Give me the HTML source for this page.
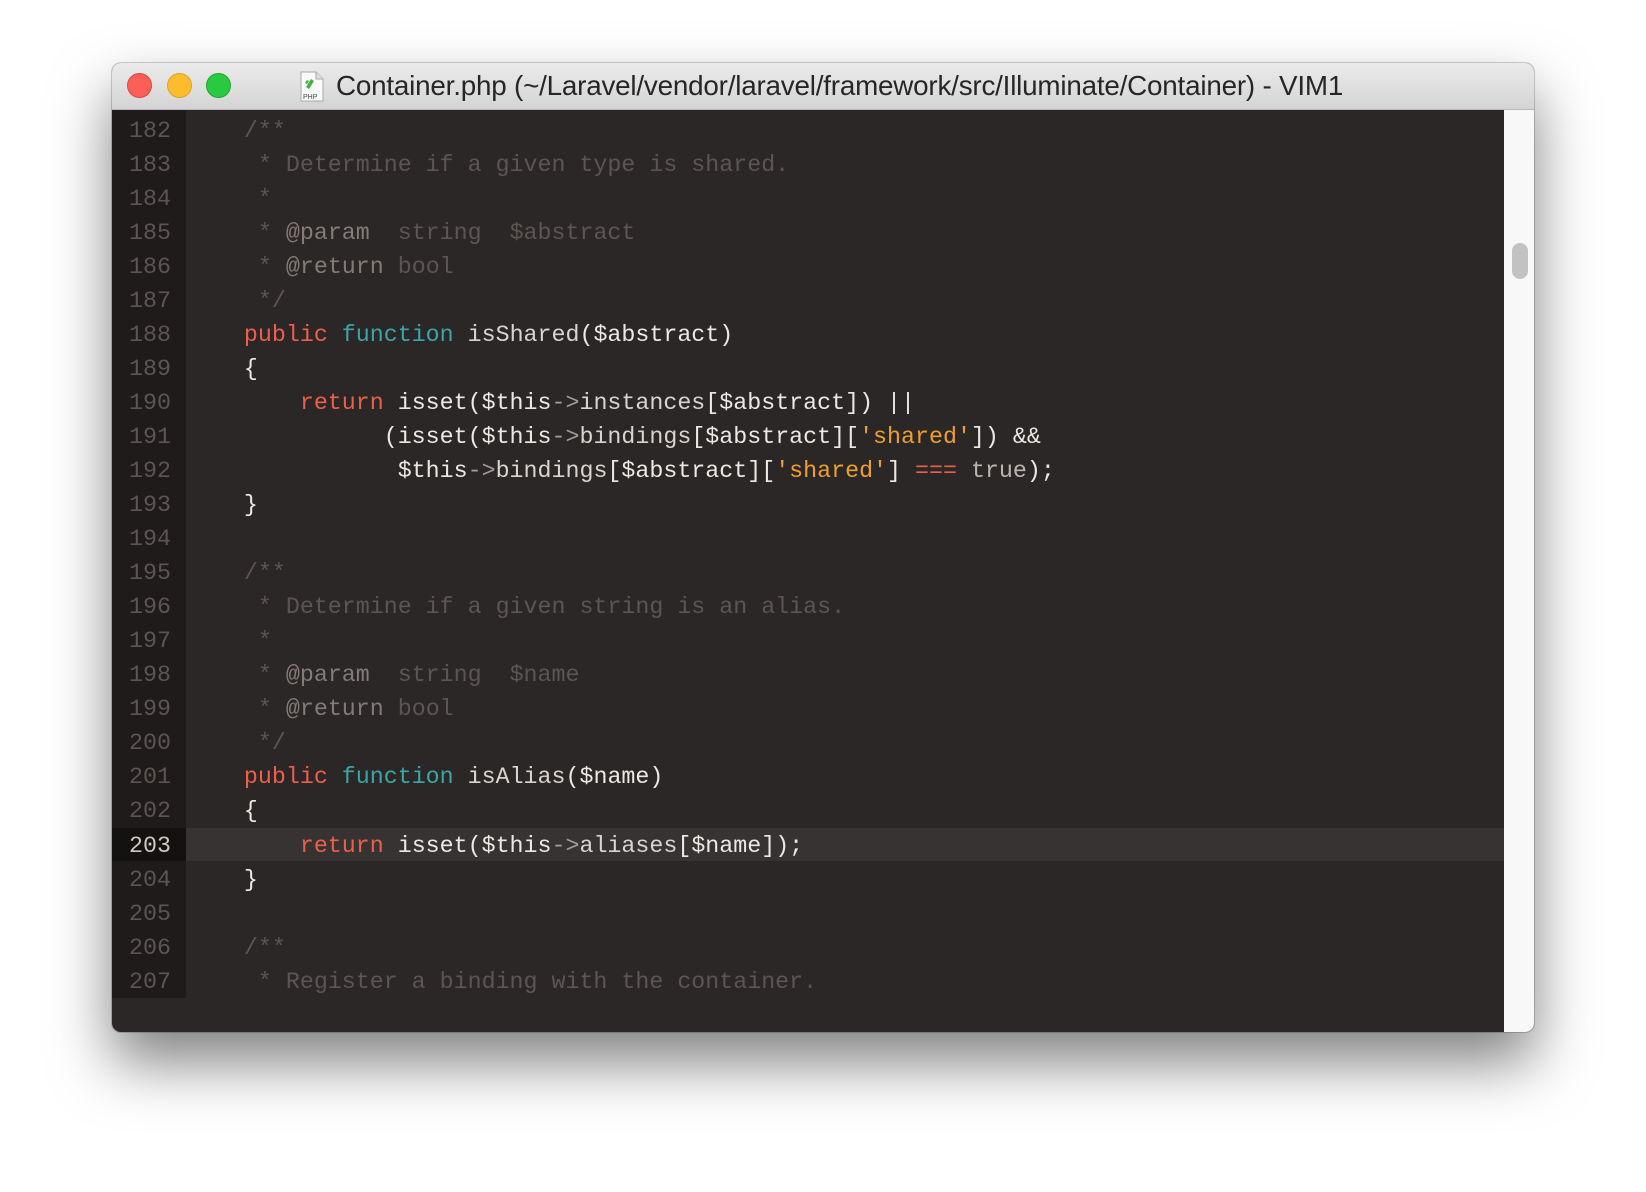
<!DOCTYPE html>
<html><head><meta charset="utf-8"><style>
html,body{margin:0;padding:0;background:#fff;width:1646px;height:1192px;overflow:hidden}
.win{position:absolute;left:112px;top:63px;width:1422px;height:969px;border-radius:9px;background:#2b2727;box-shadow:0 30px 60px rgba(0,0,0,0.5),0 0 0 1px rgba(0,0,0,0.18);overflow:hidden}
.title{position:absolute;left:0;top:0;width:1422px;height:46px;background:linear-gradient(#ebebeb,#d4d4d4);border-bottom:1px solid #b8b8b8}
.dot{position:absolute;top:10px;width:25px;height:25px;border-radius:50%}
.ttext{position:absolute;left:224px;top:7px;font:27.8px "Liberation Sans",sans-serif;color:#262626;white-space:nowrap;letter-spacing:-0.2px}
.gut{position:absolute;left:0;top:47px;width:74px;height:888px;background:#1e1b1a}
.sb{position:absolute;left:1392px;top:47px;width:30px;height:922px;background:#f8f8f8}
.thumb{position:absolute;left:1400px;top:180px;width:16px;height:36px;border-radius:8px;background:#c2c2c2}
.hl{position:absolute;left:74px;top:765px;width:1318px;height:33px;background:#383333}
.hg{position:absolute;left:0;top:765px;width:74px;height:33px;background:#141211}
.ln{position:absolute;left:0;width:59px;text-align:right;font:23.3px "Liberation Mono",monospace;color:#5d5554;height:34px;line-height:34px;margin-top:2px}
.cd{position:absolute;left:76px;font:23.3px "Liberation Mono",monospace;color:#ece8e4;white-space:pre;height:34px;line-height:34px;margin-top:2px}
.c{color:#5d5554}.d{color:#847b79}.k{color:#ec5f4a}.f{color:#3aa6a6}.s{color:#f0a02a}.a{color:#a49c98}.m{color:#d9d4cf}.b{color:#bdb4ae}
</style></head><body>
<div class="win">
<div class="title">
<div class="dot" style="left:15px;background:#fc5f57;border:1px solid #e0443e;box-sizing:border-box"></div>
<div class="dot" style="left:55px;background:#fdbc2e;border:1px solid #dea123;box-sizing:border-box"></div>
<div class="dot" style="left:94px;background:#29c941;border:1px solid #1aab29;box-sizing:border-box"></div>
<svg style="position:absolute;left:188px;top:8px" width="24" height="31" viewBox="0 0 24 31"><path d="M1 1h15l7 7v22H1z" fill="#fafafa" stroke="#a8a8a8"/><path d="M16 1v7h7" fill="#e0e0e0" stroke="#a8a8a8"/><path d="M6 16l5-8 3 2-5 8zM5 12l2-3 2 1-2 3z" fill="#3fb33f"/><text x="3" y="28" font-family="Liberation Sans" font-size="7" fill="#444">PHP</text></svg>
<div class="ttext">Container.php (~/Laravel/vendor/laravel/framework/src/Illuminate/Container) - VIM1</div>
</div>
<div class="gut"></div>
<div class="hg"></div>
<div class="hl"></div>
<div class="sb"></div>
<div class="thumb"></div>
<div class="ln" style="top:49px">182</div><div class="cd" style="top:49px"><span class="c">    /**</span></div>
<div class="ln" style="top:83px">183</div><div class="cd" style="top:83px"><span class="c">     * Determine if a given type is shared.</span></div>
<div class="ln" style="top:117px">184</div><div class="cd" style="top:117px"><span class="c">     *</span></div>
<div class="ln" style="top:151px">185</div><div class="cd" style="top:151px"><span class="c">     * </span><span class="d">@param</span><span class="c">  string  $abstract</span></div>
<div class="ln" style="top:185px">186</div><div class="cd" style="top:185px"><span class="c">     * </span><span class="d">@return</span><span class="c"> bool</span></div>
<div class="ln" style="top:219px">187</div><div class="cd" style="top:219px"><span class="c">     */</span></div>
<div class="ln" style="top:253px">188</div><div class="cd" style="top:253px">    <span class="k">public</span> <span class="f">function</span> <span class="m">isShared</span>($abstract)</div>
<div class="ln" style="top:287px">189</div><div class="cd" style="top:287px">    {</div>
<div class="ln" style="top:321px">190</div><div class="cd" style="top:321px">        <span class="k">return</span> isset($this<span class="a">-&gt;</span><span class="m">instances</span>[$abstract]) ||</div>
<div class="ln" style="top:355px">191</div><div class="cd" style="top:355px">              (isset($this<span class="a">-&gt;</span><span class="m">bindings</span>[$abstract][<span class="s">'shared'</span>]) &amp;&amp;</div>
<div class="ln" style="top:389px">192</div><div class="cd" style="top:389px">               $this<span class="a">-&gt;</span><span class="m">bindings</span>[$abstract][<span class="s">'shared'</span>] <span class="k">===</span> <span class="b">true</span>);</div>
<div class="ln" style="top:423px">193</div><div class="cd" style="top:423px">    }</div>
<div class="ln" style="top:457px">194</div>
<div class="ln" style="top:491px">195</div><div class="cd" style="top:491px"><span class="c">    /**</span></div>
<div class="ln" style="top:525px">196</div><div class="cd" style="top:525px"><span class="c">     * Determine if a given string is an alias.</span></div>
<div class="ln" style="top:559px">197</div><div class="cd" style="top:559px"><span class="c">     *</span></div>
<div class="ln" style="top:593px">198</div><div class="cd" style="top:593px"><span class="c">     * </span><span class="d">@param</span><span class="c">  string  $name</span></div>
<div class="ln" style="top:627px">199</div><div class="cd" style="top:627px"><span class="c">     * </span><span class="d">@return</span><span class="c"> bool</span></div>
<div class="ln" style="top:661px">200</div><div class="cd" style="top:661px"><span class="c">     */</span></div>
<div class="ln" style="top:695px">201</div><div class="cd" style="top:695px">    <span class="k">public</span> <span class="f">function</span> <span class="m">isAlias</span>($name)</div>
<div class="ln" style="top:729px">202</div><div class="cd" style="top:729px">    {</div>
<div class="ln" style="top:764px;color:#cfc8c4">203</div><div class="cd" style="top:764px">        <span class="k">return</span> isset($this<span class="a">-&gt;</span><span class="m">aliases</span>[$name]);</div>
<div class="ln" style="top:798px">204</div><div class="cd" style="top:798px">    }</div>
<div class="ln" style="top:832px">205</div>
<div class="ln" style="top:866px">206</div><div class="cd" style="top:866px"><span class="c">    /**</span></div>
<div class="ln" style="top:900px">207</div><div class="cd" style="top:900px"><span class="c">     * Register a binding with the container.</span></div>
</div>
</body></html>
